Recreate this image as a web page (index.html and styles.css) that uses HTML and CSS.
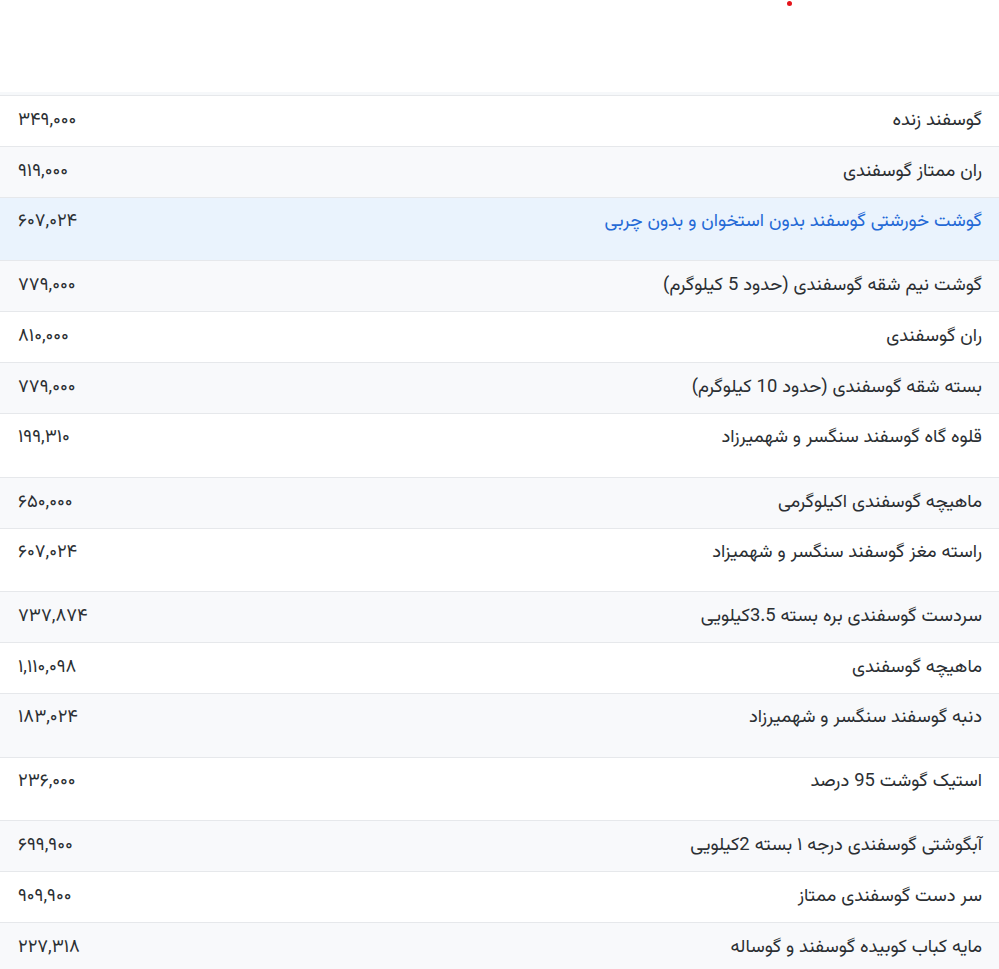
FILE: index.html
```html
<!DOCTYPE html>
<html lang="fa" dir="rtl">
<head>
<meta charset="utf-8">
<title>قیمت گوشت گوسفندی</title>
<link rel="stylesheet" href="styles.css">
</head>
<body>
<div class="page">
  <div class="top"><span class="dot"></span></div>
  <div class="band"></div>
  <div class="table">
    <div class="row odd"><div class="name">گوسفند زنده</div><div class="price">۳۴۹,۰۰۰</div></div>
    <div class="row even"><div class="name">ران ممتاز گوسفندی</div><div class="price">۹۱۹,۰۰۰</div></div>
    <div class="row active tall"><div class="name">گوشت خورشتی گوسفند بدون استخوان و بدون چربی</div><div class="price">۶۰۷,۰۲۴</div></div>
    <div class="row even"><div class="name">گوشت نیم شقه گوسفندی (حدود 5 کیلوگرم)</div><div class="price">۷۷۹,۰۰۰</div></div>
    <div class="row odd"><div class="name">ران گوسفندی</div><div class="price">۸۱۰,۰۰۰</div></div>
    <div class="row even"><div class="name">بسته شقه گوسفندی (حدود 10 کیلوگرم)</div><div class="price">۷۷۹,۰۰۰</div></div>
    <div class="row odd tall alt"><div class="name">قلوه گاه گوسفند سنگسر و شهمیرزاد</div><div class="price">۱۹۹,۳۱۰</div></div>
    <div class="row even"><div class="name">ماهیچه گوسفندی اکیلوگرمی</div><div class="price">۶۵۰,۰۰۰</div></div>
    <div class="row odd tall"><div class="name">راسته مغز گوسفند سنگسر و شهمیزاد</div><div class="price">۶۰۷,۰۲۴</div></div>
    <div class="row even"><div class="name">سردست گوسفندی بره بسته 3.5کیلویی</div><div class="price">۷۳۷,۸۷۴</div></div>
    <div class="row odd"><div class="name">ماهیچه گوسفندی</div><div class="price">۱,۱۱۰,۰۹۸</div></div>
    <div class="row even tall alt"><div class="name">دنبه گوسفند سنگسر و شهمیرزاد</div><div class="price">۱۸۳,۰۲۴</div></div>
    <div class="row odd tall"><div class="name">استیک گوشت 95 درصد</div><div class="price">۲۳۶,۰۰۰</div></div>
    <div class="row even"><div class="name">آبگوشتی گوسفندی درجه ۱ بسته 2کیلویی</div><div class="price">۶۹۹,۹۰۰</div></div>
    <div class="row odd"><div class="name">سر دست گوسفندی ممتاز</div><div class="price">۹۰۹,۹۰۰</div></div>
    <div class="row even"><div class="name">مایه کباب کوبیده گوسفند و گوساله</div><div class="price">۲۲۷,۳۱۸</div></div>
  </div>
</div>
</body>
</html>
```

FILE: styles.css
```css
* { box-sizing: border-box; }
html, body {
  margin: 0;
  padding: 0;
  background: #ffffff;
}
body {
  font-family: "Vazirmatn", "Vazir", "Noto Sans Arabic", "DejaVu Sans", sans-serif;
  color: #2b2f33;
  overflow: hidden;
}
.page {
  width: 999px;
}
.top {
  height: 92px;
  position: relative;
}
.dot {
  position: absolute;
  left: 787px;
  top: 1px;
  width: 5px;
  height: 5px;
  border-radius: 50%;
  background: #e5141b;
}
.band {
  background: #f6f8fa;
  border-bottom: 1px solid #e6e8eb;
  height: 4px;
}
.table {
  display: flex;
  flex-direction: column;
}
.row {
  display: flex;
  justify-content: space-between;
  align-items: flex-start;
  height: 51px;
  padding: 11px 17px 0 18px;
  border-bottom: 1px solid #e6e8eb;
  font-size: 18.4px;
  line-height: 28px;
}
.row.tall {
  height: 63px;
  padding-top: 10px;
}
.row.tall.alt {
  height: 64px;
}
.row.odd { background: #ffffff; }
.row.even { background: #f8f9fb; }
.row.active {
  background: #eaf3fd;
  color: #2469d6;
}
.row.active .price { color: #2b2f33; }
.name {
  text-align: right;
}
.price {
  direction: ltr;
  text-align: left;
}
```
